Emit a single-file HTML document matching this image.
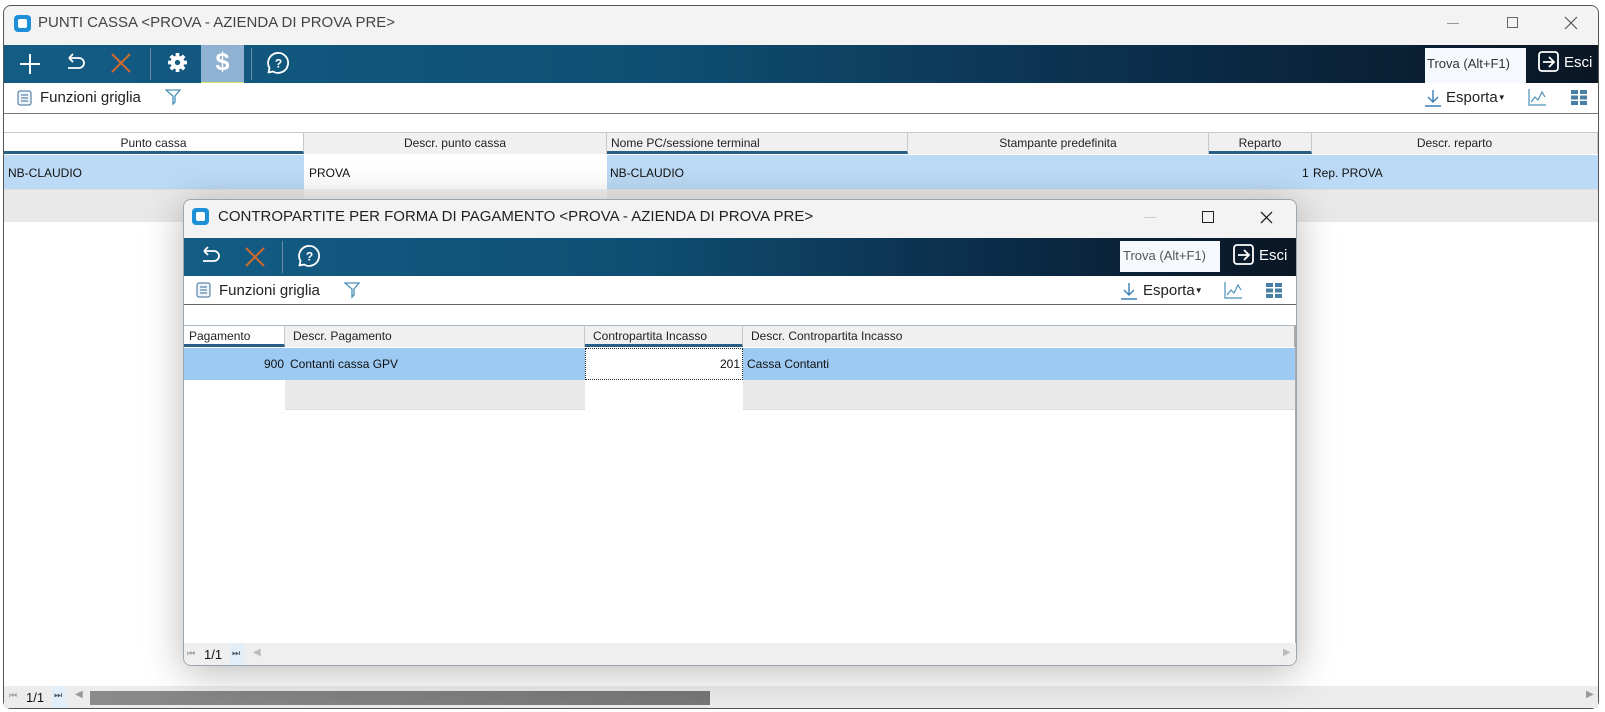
<!DOCTYPE html>
<html><head><meta charset="utf-8"><style>
*{box-sizing:border-box;margin:0;padding:0}
body{width:1605px;height:712px;background:#fff;font-family:"Liberation Sans",sans-serif;position:relative;overflow:hidden;font-size:12px;color:#111}
.a{position:absolute}
.win{border:1px solid #555;border-radius:8px;background:#fff;overflow:hidden}
.tb{background:linear-gradient(90deg,#135c84 0%,#0f4f74 40%,#0b2a45 75%,#0a1624 100%)}
.hd{position:absolute;height:22px;line-height:21px;background:#f0f0f0;border-right:1px solid #c8c8c8;border-top:1px solid #c8c8c8;text-align:center;font-size:12px;color:#222}
.hd.b{border-bottom:3px solid #2a5f85;background:#fff}
.hd.b2{border-bottom:3px solid #2a5f85}
.c{position:absolute;line-height:32px;font-size:12px;padding-left:4px}
.t{color:#fff;font-size:15px}
.sep{position:absolute;width:1px;background:#6a8aa5}
</style></head><body>

<div class="a win" style="left:3px;top:5px;width:1596px;height:704px"></div>
<div class="a" style="left:4px;top:6px;width:1594px;height:39px;background:#f3f3f3;border-radius:8px 8px 0 0"></div>
<div class="a" style="left:14px;top:15px;width:17px;height:17px;background:#1e90d8;border-radius:4px"><div style="position:absolute;left:4px;top:4px;width:9px;height:9px;background:#fff;border-radius:2px"></div></div>
<div class="a" style="left:38px;top:14px;font-size:15px;color:#444">PUNTI CASSA &lt;PROVA - AZIENDA DI PROVA PRE&gt;</div>
<div class="a" style="left:1447px;top:23px;width:12px;height:1px;background:#999"></div>
<div class="a" style="left:1507px;top:17px;width:11px;height:11px;border:1px solid #666"></div>
<svg class="a" style="left:1564px;top:16px" width="14" height="14"><path d="M1 1L13 13M13 1L1 13" stroke="#555" stroke-width="1.2"/></svg>

<div class="a tb" style="left:4px;top:45px;width:1594px;height:38px"></div>
<svg class="a" style="left:18px;top:52px" width="24" height="24"><path d="M12 2V22M2 12H22" stroke="#fff" stroke-width="2"/></svg>
<svg class="a" style="left:63px;top:52px" width="24" height="24"><path d="M6 6H16A5 5 0 0 1 16 16H5M6 6L10 2M6 6L10 10" stroke="#fff" stroke-width="1.8" fill="none"/></svg>
<svg class="a" style="left:110px;top:52px" width="22" height="22"><path d="M2 2L20 20M20 2L2 20" stroke="#d2692e" stroke-width="2"/></svg>
<div class="sep" style="left:150px;top:48px;height:32px"></div>
<svg class="a" style="left:167px;top:52px" width="21" height="21" viewBox="0 0 20 20"><circle cx="10" cy="10" r="6.5" fill="#fff"/><g stroke="#fff" stroke-width="3.5"><path d="M10 1V19M1 10H19M3.6 3.6L16.4 16.4M16.4 3.6L3.6 16.4"/></g><circle cx="10" cy="10" r="2.5" fill="#135c84"/></svg>
<div class="a" style="left:201px;top:45px;width:43px;height:38px;background:#8fb1d2;border-bottom:1px solid #d6e66a"></div>
<div class="a" style="left:201px;top:48px;width:43px;text-align:center;color:#fff;font-size:25px;font-weight:bold">$</div>
<div class="sep" style="left:251px;top:48px;height:32px"></div>
<svg class="a" style="left:266px;top:51px" width="24" height="24"><path d="M7 20.5L2.5 21.5L3.5 17A10 10 0 1 1 7 20.5Z" stroke="#fff" stroke-width="1.8" fill="none" stroke-linejoin="round"/><text x="12.5" y="16.5" text-anchor="middle" fill="#fff" font-size="12" font-weight="bold" font-family="Liberation Sans">?</text></svg>
<div class="a" style="left:1425px;top:48px;width:101px;height:35px;background:#f5f9fd;font-size:13px;color:#333;line-height:32px;padding-left:2px">Trova (Alt+F1)</div>
<svg class="a" style="left:1538px;top:51px" width="22" height="22"><rect x="1" y="1" width="19" height="19" rx="3" stroke="#fff" stroke-width="1.8" fill="none"/><path d="M5 11H16M11 6L16 11L11 16" stroke="#fff" stroke-width="1.8" fill="none"/></svg>
<div class="a t" style="left:1564px;top:54px">Esci</div>

<svg class="a" style="left:17px;top:90px" width="16" height="16"><rect x="1" y="1" width="13" height="14" rx="2" stroke="#3a6a95" fill="#eef4fa"/><path d="M4 5H11M4 8H11M4 11H11" stroke="#3a6a95"/></svg>
<div class="a" style="left:40px;top:89px;font-size:15px;color:#222">Funzioni griglia</div>
<svg class="a" style="left:165px;top:89px" width="16" height="17"><path d="M1 1H15L10 7V13L8 15V7Z" stroke="#4a90b8" fill="none" stroke-width="1.3"/></svg>
<svg class="a" style="left:1424px;top:89px" width="18" height="18"><path d="M9 1V13M4 8L9 13L14 8M1 17H17" stroke="#3a7fb5" stroke-width="1.4" fill="none"/></svg>
<div class="a" style="left:1446px;top:89px;font-size:15px;color:#222">Esporta<span style="font-size:8px;vertical-align:2px">▼</span></div>
<svg class="a" style="left:1528px;top:88px" width="19" height="18"><path d="M1 1V17H18M3 14L7 9L10 12L14 4L17 9" stroke="#4a90b8" stroke-width="1.2" fill="none"/></svg>
<svg class="a" style="left:1571px;top:90px" width="16" height="15"><g fill="#4a7fa5"><rect x="0" y="0" width="7" height="4"/><rect x="9" y="0" width="7" height="4"/><rect x="0" y="5.5" width="7" height="4"/><rect x="9" y="5.5" width="7" height="4"/><rect x="0" y="11" width="7" height="4"/><rect x="9" y="11" width="7" height="4"/></g></svg>
<div class="a" style="left:4px;top:113px;width:1594px;height:1px;background:#777"></div>

<div class="hd b" style="left:4px;top:132px;width:300px">Punto cassa</div>
<div class="hd" style="left:304px;top:132px;width:303px">Descr. punto cassa</div>
<div class="hd b2" style="left:607px;top:132px;width:301px;text-align:left;padding-left:4px">Nome PC/sessione terminal</div>
<div class="hd" style="left:908px;top:132px;width:301px">Stampante predefinita</div>
<div class="hd b2" style="left:1209px;top:132px;width:103px">Reparto</div>
<div class="hd" style="left:1312px;top:132px;width:286px">Descr. reparto</div>
<div class="a" style="left:4px;top:155px;width:1594px;height:34px;background:#bcdaf5"></div>
<div class="a" style="left:304px;top:155px;width:303px;height:34px;background:#fff"></div>
<div class="c" style="left:4px;top:157px">NB-CLAUDIO</div>
<div class="c" style="left:305px;top:157px">PROVA</div>
<div class="c" style="left:606px;top:157px">NB-CLAUDIO</div>
<div class="c" style="left:1298px;top:157px">1</div>
<div class="c" style="left:1309px;top:157px">Rep. PROVA</div>
<div class="a" style="left:4px;top:189px;width:1594px;height:33px;background:#e9e9e9;border-top:1px solid #ddd"></div>
<div class="a" style="left:304px;top:189px;width:303px;height:33px;background:#f3f3f3"></div>

<div class="a" style="left:4px;top:686px;width:1594px;height:22px;background:#ececec"></div>
<div class="a" style="left:9px;top:690px;font-size:9px;color:#999">⏮</div>
<div class="a" style="left:26px;top:690px;font-size:13px">1/1</div>
<div class="a" style="left:52px;top:686px;width:15px;height:22px;background:#e2eef8"></div>
<div class="a" style="left:54px;top:690px;font-size:9px;color:#456">⏭</div>
<div class="a" style="left:75px;top:689px;font-size:10px;color:#999">◀</div>
<div class="a" style="left:90px;top:691px;width:620px;height:14px;background:linear-gradient(90deg,#8a8a8a,#777)"></div>
<div class="a" style="left:1586px;top:689px;font-size:10px;color:#999">▶</div>

<div class="a" style="left:183px;top:199px;width:1114px;height:467px;border-radius:8px;box-shadow:0 6px 40px rgba(0,0,0,0.28)"></div>
<div class="a win" style="left:183px;top:199px;width:1114px;height:467px;border-color:#9aa5b0"></div>
<div class="a" style="left:184px;top:200px;width:1112px;height:38px;background:#f3f3f3;border-radius:8px 8px 0 0"></div>
<div class="a" style="left:192px;top:208px;width:17px;height:17px;background:#1e90d8;border-radius:4px"><div style="position:absolute;left:4px;top:4px;width:9px;height:9px;background:#fff;border-radius:2px"></div></div>
<div class="a" style="left:218px;top:208px;font-size:15px;color:#222">CONTROPARTITE PER FORMA DI PAGAMENTO &lt;PROVA - AZIENDA DI PROVA PRE&gt;</div>
<div class="a" style="left:1144px;top:217px;width:12px;height:1px;background:#ccc"></div>
<div class="a" style="left:1202px;top:211px;width:12px;height:12px;border:1.5px solid #222"></div>
<svg class="a" style="left:1260px;top:211px" width="13" height="13"><path d="M1 1L12 12M12 1L1 12" stroke="#222" stroke-width="1.3"/></svg>

<div class="a tb" style="left:184px;top:238px;width:1112px;height:38px"></div>
<svg class="a" style="left:198px;top:245px" width="24" height="24"><path d="M6 6H16A5 5 0 0 1 16 16H5M6 6L10 2M6 6L10 10" stroke="#fff" stroke-width="1.8" fill="none"/></svg>
<svg class="a" style="left:244px;top:246px" width="22" height="22"><path d="M2 2L20 20M20 2L2 20" stroke="#d2692e" stroke-width="2"/></svg>
<div class="sep" style="left:282px;top:241px;height:32px"></div>
<svg class="a" style="left:297px;top:244px" width="24" height="24"><path d="M7 20.5L2.5 21.5L3.5 17A10 10 0 1 1 7 20.5Z" stroke="#fff" stroke-width="1.8" fill="none" stroke-linejoin="round"/><text x="12.5" y="16.5" text-anchor="middle" fill="#fff" font-size="12" font-weight="bold" font-family="Liberation Sans">?</text></svg>
<div class="a" style="left:1120px;top:241px;width:100px;height:31px;background:#f5f9fd;font-size:13px;color:#555;line-height:30px;padding-left:3px">Trova (Alt+F1)</div>
<svg class="a" style="left:1233px;top:244px" width="22" height="22"><rect x="1" y="1" width="19" height="19" rx="3" stroke="#fff" stroke-width="1.8" fill="none"/><path d="M5 11H16M11 6L16 11L11 16" stroke="#fff" stroke-width="1.8" fill="none"/></svg>
<div class="a t" style="left:1259px;top:247px">Esci</div>

<svg class="a" style="left:196px;top:282px" width="16" height="16"><rect x="1" y="1" width="13" height="14" rx="2" stroke="#3a6a95" fill="#eef4fa"/><path d="M4 5H11M4 8H11M4 11H11" stroke="#3a6a95"/></svg>
<div class="a" style="left:219px;top:282px;font-size:15px;color:#222">Funzioni griglia</div>
<svg class="a" style="left:344px;top:282px" width="16" height="17"><path d="M1 1H15L10 7V13L8 15V7Z" stroke="#4a90b8" fill="none" stroke-width="1.3"/></svg>
<svg class="a" style="left:1120px;top:282px" width="18" height="18"><path d="M9 1V13M4 8L9 13L14 8M1 17H17" stroke="#3a7fb5" stroke-width="1.4" fill="none"/></svg>
<div class="a" style="left:1143px;top:282px;font-size:15px;color:#222">Esporta<span style="font-size:8px;vertical-align:2px">▼</span></div>
<svg class="a" style="left:1224px;top:281px" width="19" height="18"><path d="M1 1V17H18M3 14L7 9L10 12L14 4L17 9" stroke="#4a90b8" stroke-width="1.2" fill="none"/></svg>
<svg class="a" style="left:1266px;top:283px" width="16" height="15"><g fill="#4a7fa5"><rect x="0" y="0" width="7" height="4"/><rect x="9" y="0" width="7" height="4"/><rect x="0" y="5.5" width="7" height="4"/><rect x="9" y="5.5" width="7" height="4"/><rect x="0" y="11" width="7" height="4"/><rect x="9" y="11" width="7" height="4"/></g></svg>
<div class="a" style="left:184px;top:304px;width:1112px;height:1px;background:#666"></div>

<div class="hd b" style="left:184px;top:325px;width:101px;text-align:left;padding-left:5px;border-top-color:#a9b6c4">Pagamento</div>
<div class="hd" style="left:285px;top:325px;width:300px;text-align:left;padding-left:8px;border-top-color:#a9b6c4">Descr. Pagamento</div>
<div class="hd b2" style="left:585px;top:325px;width:158px;text-align:left;padding-left:8px;border-top-color:#a9b6c4">Contropartita Incasso</div>
<div class="hd" style="left:743px;top:325px;width:552px;text-align:left;padding-left:8px;border-top-color:#a9b6c4;border-right-color:#aaa">Descr. Contropartita Incasso</div>
<div class="a" style="left:184px;top:348px;width:1111px;height:32px;background:#9ccaf2"></div>
<div class="a" style="left:585px;top:348px;width:158px;height:32px;background:#fff;border:1px dotted #222"></div>
<div class="c" style="left:184px;top:348px;width:100px;text-align:right">900</div>
<div class="c" style="left:286px;top:348px">Contanti cassa GPV</div>
<div class="c" style="left:585px;top:348px;width:155px;text-align:right">201</div>
<div class="c" style="left:743px;top:348px">Cassa Contanti</div>
<div class="a" style="left:184px;top:380px;width:1111px;height:30px;background:#e9e9e9;border-bottom:1px solid #ddd"></div>
<div class="a" style="left:184px;top:380px;width:101px;height:30px;background:#fff"></div>
<div class="a" style="left:585px;top:380px;width:158px;height:30px;background:#fff"></div>
<div class="a" style="left:1295px;top:325px;width:1px;height:318px;background:#aaa"></div>

<div class="a" style="left:184px;top:643px;width:1112px;height:22px;background:#efefef;border-radius:0 0 8px 8px"></div>
<div class="a" style="left:187px;top:648px;font-size:9px;color:#999">⏮</div>
<div class="a" style="left:204px;top:647px;font-size:13px">1/1</div>
<div class="a" style="left:230px;top:643px;width:15px;height:22px;background:#e2eef8"></div>
<div class="a" style="left:232px;top:648px;font-size:9px;color:#456">⏭</div>
<div class="a" style="left:253px;top:647px;font-size:10px;color:#bbb">◀</div>
<div class="a" style="left:1283px;top:647px;font-size:10px;color:#bbb">▶</div>
</body></html>
